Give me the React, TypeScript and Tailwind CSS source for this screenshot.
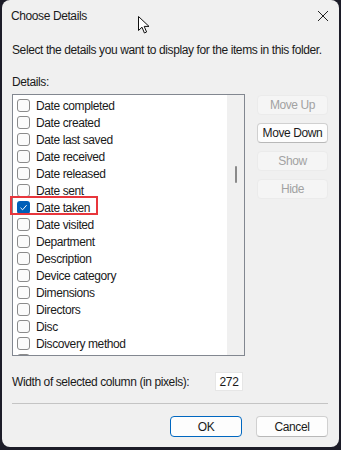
import React from "react";

const items = [
  "Date completed",
  "Date created",
  "Date last saved",
  "Date received",
  "Date released",
  "Date sent",
  "Date taken",
  "Date visited",
  "Department",
  "Description",
  "Device category",
  "Dimensions",
  "Directors",
  "Disc",
  "Discovery method",
  "Distributor",
];

function Checkbox({ checked }: { checked?: boolean }) {
  if (checked) {
    return (
      <span className="w-[13px] h-[13px] rounded-[3px] bg-[#005fb8] flex items-center justify-center shrink-0">
        <svg width="9" height="9" viewBox="0 0 9 9">
          <path d="M1.5 4.8 L3.6 6.8 L7.6 2.2" fill="none" stroke="#fff" strokeWidth="1" />
        </svg>
      </span>
    );
  }
  return <span className="w-[13px] h-[13px] rounded-[3px] border border-[#8b8b8b] bg-[#fbfbfb] shrink-0" />;
}

function SideButton({ label, enabled }: { label: string; enabled?: boolean }) {
  return (
    <div
      className={
        enabled
          ? "h-[20px] rounded-[4px] border border-[#d0d0d0] border-b-[#b8b8b8] bg-[#fdfdfd] flex items-center justify-center text-[#1a1a1a]"
          : "h-[20px] rounded-[4px] border border-[#ebebeb] bg-[#f5f5f5] flex items-center justify-center text-[#a2a2a2]"
      }
    >
      {label}
    </div>
  );
}

export default function App() {
  return (
    <div className="relative w-[341px] h-[450px] bg-[#1c1c28] px-[2px] pb-[3px] font-['Segoe_UI','Liberation_Sans',sans-serif] text-[12px] leading-[16px] tracking-[-0.4px] text-[#1a1a1a] whitespace-nowrap">
      <div className="h-full rounded-[8px] bg-[#f0f0f0] flex flex-col">
        {/* title bar */}
        <div className="h-[32px] flex items-center justify-between pl-[9px] pr-[10px] shrink-0">
          <span className="text-[#1a1a1a]">Choose Details</span>
          <svg width="12" height="12" viewBox="0 0 12 12">
            <path d="M1 1 L11 11 M11 1 L1 11" stroke="#222" strokeWidth="1" />
          </svg>
        </div>

        <div className="pl-[10px] pr-[11px] flex flex-col">
          <p className="mt-[10px]">Select the details you want to display for the items in this folder.</p>
          <p className="mt-[16px]">Details:</p>

          <div className="mt-[4px] flex gap-[12px]">
            {/* list */}
            <div className="w-[233px] h-[262px] border border-[#828790] bg-white flex overflow-hidden">
              <div className="flex-1 pt-[2px] pl-[4px] overflow-hidden">
                {items.map((it) => (
                  <div key={it} className="h-[17px] flex items-center gap-[6px]">
                    <Checkbox checked={it === "Date taken"} />
                    <span>{it}</span>
                  </div>
                ))}
              </div>
              <div className="w-[17px] bg-[#f0f0f0] flex justify-center pt-[71px]">
                <div className="w-[2px] h-[17px] rounded-full bg-[#8a8a8a]" />
              </div>
            </div>

            {/* buttons */}
            <div className="w-[71px] pt-[1px] flex flex-col gap-[8px]">
              <SideButton label="Move Up" />
              <SideButton label="Move Down" enabled />
              <SideButton label="Show" />
              <SideButton label="Hide" />
            </div>
          </div>

          <div className="mt-[16px] flex items-center">
            <span className="w-[203px]">Width of selected column (in pixels):</span>
            <div className="w-[28px] h-[19px] bg-white border border-[#e6e6e6] flex items-center justify-center">
              272
            </div>
          </div>

          <div className="mt-[12px] h-px bg-[#c4c4c4]" />

          <div className="mt-[12px] flex justify-end gap-[14px]">
            <div className="w-[72px] h-[21px] rounded-[4px] border border-[#0067c0] bg-[#fdfdfd] flex items-center justify-center">
              OK
            </div>
            <div className="w-[72px] h-[21px] rounded-[4px] border border-[#d0d0d0] border-b-[#b8b8b8] bg-[#fdfdfd] flex items-center justify-center">
              Cancel
            </div>
          </div>
        </div>
      </div>

      {/* annotation highlight */}
      <div className="absolute left-[10px] top-[196px] w-[88px] h-[19px] border-[2px] border-[#e8363c]" />

      {/* mouse cursor */}
      <svg className="absolute left-[138px] top-[16px]" width="13" height="19" viewBox="0 0 13 19">
        <path
          d="M0.5 0.5 L0.5 14.5 L4 11.2 L6.4 17 L8.6 16 L6.2 10.4 L11 10.4 Z"
          fill="#fff"
          stroke="#111"
          strokeWidth="1"
          strokeLinejoin="round"
        />
      </svg>
    </div>
  );
}
